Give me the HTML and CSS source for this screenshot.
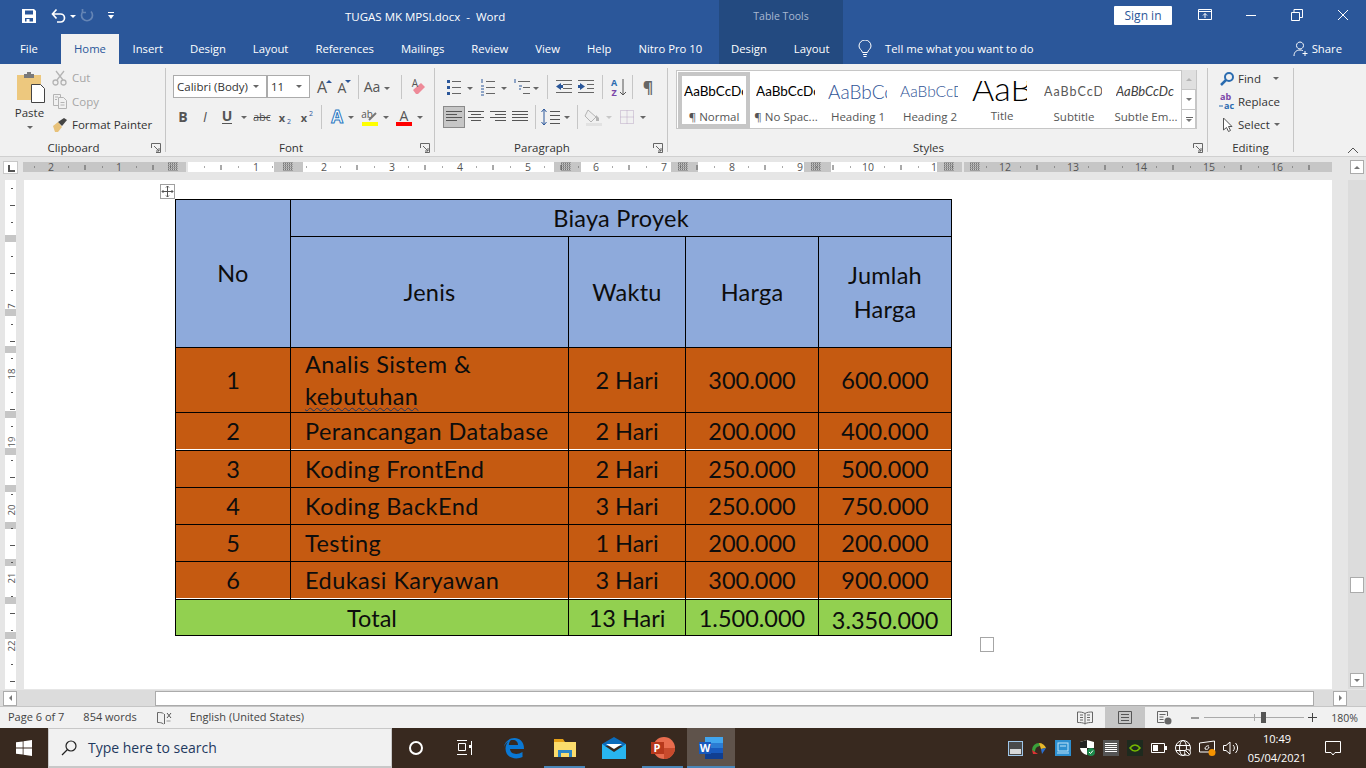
FILE: index.html
```html
<!DOCTYPE html>
<html>
<head>
	<title>TUGAS MK MPSI.docx - Word</title>
	<meta charset="utf-8">
	<link rel="stylesheet" href="styles.css">
</head>
<body>

<!-- title bar -->
<div class="titlebar">
	<div class="qat">
		<svg width="16" height="16" viewBox="0 0 16 16"><path fill="#fff" fill-rule="evenodd" d="M1 1h12l2 2v12H1zM4 2.500v4h8v-4zM4 10v3.500h1.500V11h3v2.500h3.500V10z"/></svg>
		<svg class="q-undo" width="26" height="16" viewBox="0 0 26 16"><path fill="none" stroke="#fff" stroke-width="1.700" d="M1.500 6h8a4 4 0 0 1 0 8H6M5.500 1.500L1.500 6l4 4.500"/><path fill="#fff" d="M19 7h6l-3 3z"/></svg>
		<svg class="q-redo" width="16" height="16" viewBox="0 0 16 16"><path fill="none" stroke="#6585b5" stroke-width="1.700" d="M4 3.500a5.500 5.500 0 1 0 8 0M3.500 1v3.500H7"/></svg>
		<svg class="q-more" width="8" height="10" viewBox="0 0 8 10"><path fill="#fff" d="M1 1h6v1H1zM1 4h6L4 8z"/></svg>
	</div>
	<div class="doc-title">TUGAS MK MPSI.docx &nbsp;-&nbsp; Word</div>
	<div class="ctx-title">Table Tools</div>
	<div class="win-right">
		<div class="signin">Sign in</div>
		<div class="winbtn"><svg width="14" height="12" viewBox="0 0 14 12"><path fill="none" stroke="#fff" d="M.5.500h13v10H.5zM.5 2.500h13M7 9V4.500M5 6.500l2-2 2 2"/></svg></div>
		<div class="winbtn"><svg width="12" height="12" viewBox="0 0 12 12"><path stroke="#fff" d="M1 6.500h10"/></svg></div>
		<div class="winbtn"><svg width="12" height="12" viewBox="0 0 12 12"><path fill="none" stroke="#fff" d="M.5 3.500h8v8h-8zM3 3.500v-3h8.500v8H8.500"/></svg></div>
		<div class="winbtn"><svg width="12" height="12" viewBox="0 0 12 12"><path stroke="#fff" d="M1 1l10 10M11 1L1 11"/></svg></div>
	</div>
</div>

<!-- tabs -->
<div class="tabs">
	<div class="tabs-main">
		<span class="tab tab-file">File</span>
		<span class="tab tab-home">Home</span>
		<span class="tab">Insert</span>
		<span class="tab">Design</span>
		<span class="tab">Layout</span>
		<span class="tab">References</span>
		<span class="tab">Mailings</span>
		<span class="tab">Review</span>
		<span class="tab">View</span>
		<span class="tab">Help</span>
		<span class="tab">Nitro Pro 10</span>
	</div>
	<div class="tabs-ctx">
		<span class="tab">Design</span>
		<span class="tab">Layout</span>
	</div>
	<div class="tell">
		<svg width="14" height="18" viewBox="0 0 14 18"><path fill="none" stroke="#fff" d="M4.500 12.500C4 10 1 9 1 6a6 6 0 0 1 12 0c0 3-3 4-3.500 6.500zM5 14.500h4M5.500 16.500h3"/></svg>
		<span>Tell me what you want to do</span>
	</div>
	<div class="share">
		<svg width="16" height="16" viewBox="0 0 16 16"><path fill="none" stroke="#fff" d="M7 1a3.500 3.500 0 1 0 .01 0zM1 15c0-4 2.500-6 6-6 1 0 2 .2 2.800.6M12 10v5M9.500 12.500h5"/></svg>
		<span>Share</span>
	</div>
</div>

<!-- ribbon -->
<div class="ribbon">

	<div class="group g-clip">
		<div class="group-body clip-body">
			<div class="paste">
				<svg width="30" height="32" viewBox="0 0 30 32"><path fill="#edc87e" d="M1 3h24v25H1z"/><path fill="#7a7a7a" d="M8 2h3V0h4v2h3v4H8z"/><path fill="#fff" stroke="#444" d="M15.500 12.500h9l4 4v14h-13z"/></svg>
				<span>Paste</span>
				<i class="caret"></i>
			</div>
			<div class="clip-rows">
				<div class="clip-row off"><svg width="16" height="16" viewBox="0 0 16 16"><g fill="none" stroke="#b4b4b4" stroke-width="1.300"><path d="M4 1l7 9M12 1L5 10"/><circle cx="3.500" cy="12.500" r="2.500"/><circle cx="11.500" cy="12.500" r="2.500"/></g></svg><span>Cut</span></div>
				<div class="clip-row off"><svg width="16" height="16" viewBox="0 0 16 16"><g fill="#f1f1f1" stroke="#b4b4b4"><path d="M1.500 1.500h7v11h-7z"/><path d="M6.500 4.500h5l3 3v8h-8z"/><path d="M3 4h3M3 6.500h2M8.500 9.500h4M8.500 12h4"/></g></svg><span>Copy</span></div>
				<div class="clip-row"><svg width="16" height="16" viewBox="0 0 16 16"><path fill="#e8c27a" d="M1 9l5-4 4 5-4 5H3z"/><path fill="#444" d="M6 5l6-4 3 2-5 6z"/></svg><span>Format Painter</span></div>
			</div>
		</div>
		<div class="group-label">Clipboard<svg class="launch" width="10" height="10" viewBox="0 0 10 10"><path fill="none" stroke="#666" d="M.5 5V.500h9v9H5M3 3l5 5M8 5v3H5"/></svg></div>
	</div>

	<div class="group g-font">
		<div class="group-body">
			<div class="tool-row font-row1">
				<div class="combo combo-font"><span>Calibri (Body)</span><i class="caret"></i></div>
				<div class="combo combo-size"><span>11</span><i class="caret"></i></div>
				<svg class="first-a" width="20" height="22" viewBox="0 0 20 22"><text x="9" y="17" class="ic-letter big">A</text><path fill="#2b579a" d="M13 7l3-3 3 3z"/></svg>
				<svg width="20" height="22" viewBox="0 0 20 22"><text x="9" y="17" class="ic-letter">A</text><path fill="#2b579a" d="M12 4h6l-3 3z"/></svg>
				<i class="sep sep-a"></i>
				<svg width="33" height="22" viewBox="0 0 33 22"><text x="10" y="16" class="ic-letter">Aa</text><path fill="#666" d="M22 11h6l-3 3z"/></svg>
				<i class="sep sep-b"></i>
				<svg width="20" height="22" viewBox="0 0 20 22"><path fill="#ee8a98" d="M5 14l8-7 4 4-7 7H8z"/><text x="7" y="11" class="ic-letter tiny">A</text></svg>
			</div>
			<div class="tool-row font-row2">
				<svg width="22" height="22" viewBox="0 0 22 22"><text x="11" y="16" class="ic-letter bold">B</text></svg>
				<svg width="22" height="22" viewBox="0 0 22 22"><text x="11" y="16" class="ic-letter ital">I</text></svg>
				<svg width="36" height="22" viewBox="0 0 36 22"><text x="11" y="15" class="ic-letter bold">U</text><path stroke="#555" d="M6 17.500h10"/><path fill="#666" d="M25 10h6l-3 3z"/></svg>
				<svg width="21" height="22" viewBox="0 0 21 22"><text x="10" y="15" class="ic-letter small">abc</text><path stroke="#444" d="M2 11.500h16"/></svg>
				<svg width="22" height="22" viewBox="0 0 22 22"><text x="9" y="16" class="ic-letter bold small">x</text><text x="16" y="18" class="ic-letter blue-sub">2</text></svg>
				<svg width="22" height="22" viewBox="0 0 22 22"><text x="9" y="16" class="ic-letter bold small">x</text><text x="16" y="10" class="ic-letter blue-sub">2</text></svg>
				<i class="sep"></i>
				<svg width="32" height="22" viewBox="0 0 32 22"><text x="11" y="17" class="ic-effect">A</text><path fill="#666" d="M22 10h6l-3 3z"/></svg>
				<svg width="34" height="22" viewBox="0 0 34 22"><text x="9" y="12" class="ic-letter tiny">ab</text><path stroke="#777" stroke-width="2" d="M11 14l7-7"/><path fill="#ffff00" d="M4 16h16v4H4z"/><path fill="#666" d="M25 10h6l-3 3z"/></svg>
				<svg width="36" height="22" viewBox="0 0 36 22"><text x="12" y="15" class="ic-letter">A</text><path fill="#f00" d="M4 16h16v4H4z"/><path fill="#666" d="M25 10h6l-3 3z"/></svg>
			</div>
		</div>
		<div class="group-label">Font<svg class="launch" width="10" height="10" viewBox="0 0 10 10"><path fill="none" stroke="#666" d="M.5 5V.500h9v9H5M3 3l5 5M8 5v3H5"/></svg></div>
	</div>

	<div class="group g-para">
		<div class="group-body">
			<div class="tool-row para-row1">
				<svg width="34" height="22" viewBox="0 0 34 22"><path fill="#2b579a" d="M4 4h3v3H4zM4 10h3v3H4zM4 16h3v3H4z"/><path stroke="#666" d="M9 5.500h9M9 11.500h9M9 17.500h9"/><path fill="#666" d="M24 11h6l-3 3z"/></svg>
				<svg width="33" height="22" viewBox="0 0 33 22"><path stroke="#2b579a" d="M5 3v4M4 10h3M4 13h3M4 16h3M4 19h3"/><path stroke="#666" d="M9 5.500h9M9 11.500h9M9 17.500h9"/><path fill="#666" d="M24 11h6l-3 3z"/></svg>
				<svg width="33" height="22" viewBox="0 0 33 22"><path stroke="#2b579a" d="M5 3v4M9 10h3M9 13h2"/><path stroke="#666" d="M8 5.500h12M13 11.500h7M13 17.500h7"/><path fill="#666" d="M23 11h6l-3 3z"/></svg>
				<i class="sep"></i>
				<svg width="23" height="22" viewBox="0 0 23 22"><path stroke="#666" d="M4 4.500h16M11 8.500h9M11 12.500h9M4 16.500h16"/><path fill="#2b579a" d="M4 10.500l5-3.500v2h2v3H9v2z"/></svg>
				<svg width="23" height="22" viewBox="0 0 23 22"><path stroke="#666" d="M3 4.500h16M3 16.500h16M12 8.500h7M12 12.500h7"/><path fill="#2b579a" d="M10 10.500L5 7v2H3v3h2v2z"/></svg>
				<i class="sep"></i>
				<svg width="21" height="22" viewBox="0 0 21 22"><text x="7" y="10" class="ic-az blue-t">A</text><text x="7" y="20" class="ic-az purple-t">Z</text><path fill="none" stroke="#555" d="M16 3v16M13 16l3 3 3-3"/></svg>
				<i class="sep"></i>
				<svg width="22" height="22" viewBox="0 0 22 22"><text x="11" y="17" class="ic-pil">¶</text></svg>
			</div>
			<div class="tool-row para-row2">
				<svg class="align-on" width="22" height="22" viewBox="0 0 22 22"><path stroke="#555" d="M3 5.500h16M3 8.500h11M3 11.500h16M3 14.500h11"/></svg>
				<svg width="22" height="22" viewBox="0 0 22 22"><path stroke="#555" d="M3 5.500h16M6 8.500h10M3 11.500h16M6 14.500h10"/></svg>
				<svg width="22" height="22" viewBox="0 0 22 22"><path stroke="#555" d="M3 5.500h16M8 8.500h11M3 11.500h16M8 14.500h11"/></svg>
				<svg width="22" height="22" viewBox="0 0 22 22"><path stroke="#555" d="M3 5.500h16M3 8.500h16M3 11.500h16M3 14.500h16"/></svg>
				<i class="sep"></i>
				<svg width="33" height="22" viewBox="0 0 33 22"><path fill="none" stroke="#2b579a" d="M4 3v16M1.500 6L4 3l2.500 3M1.500 16L4 19l2.500-3"/><path stroke="#555" d="M10 5.500h10M10 9.500h10M10 13.500h10M10 17.500h10"/><path fill="#666" d="M24 10h6l-3 3z"/></svg>
				<i class="sep"></i>
				<svg width="33" height="22" viewBox="0 0 33 22"><path fill="#eee" stroke="#b4b4b4" d="M6 4l8 7-5 5-6-6z"/><path fill="#b4b4b4" d="M14 9l3 3v3h-3z"/><path fill="#e2e2e2" d="M4 17h16v3H4z"/><path fill="#c8c8c8" d="M24 10h6l-3 3z"/></svg>
				<svg width="35" height="22" viewBox="0 0 35 22"><path fill="none" stroke="#bba9c4" stroke-dasharray="1 1" d="M5.500 4.500h13v13h-13zM12 4.500v13M5.500 11h13"/><path fill="#666" d="M25 10h6l-3 3z"/></svg>
			</div>
		</div>
		<div class="group-label">Paragraph<svg class="launch" width="10" height="10" viewBox="0 0 10 10"><path fill="none" stroke="#666" d="M.5 5V.500h9v9H5M3 3l5 5M8 5v3H5"/></svg></div>
	</div>

	<div class="group g-styles">
		<div class="group-body">
			<div class="gallery">
				<div class="style-item selected"><div class="preview">AaBbCcDc</div><div class="style-name">¶ Normal</div></div>
				<div class="style-item"><div class="preview">AaBbCcDc</div><div class="style-name">¶ No Spac...</div></div>
				<div class="style-item"><div class="preview pv-h1">AaBbCc</div><div class="style-name">Heading 1</div></div>
				<div class="style-item"><div class="preview pv-h2">AaBbCcD</div><div class="style-name">Heading 2</div></div>
				<div class="style-item"><div class="preview pv-title">AaB</div><div class="style-name">Title</div></div>
				<div class="style-item"><div class="preview pv-sub">AaBbCcD</div><div class="style-name">Subtitle</div></div>
				<div class="style-item"><div class="preview pv-em">AaBbCcDc</div><div class="style-name">Subtle Em...</div></div>
				<div class="gallery-scroll">
					<div class="gs-btn gs-off"><i class="tri-up"></i></div>
					<div class="gs-btn"><i class="tri-down"></i></div>
					<div class="gs-btn gs-more"><i class="bar"></i><i class="tri-down"></i></div>
				</div>
			</div>
		</div>
		<div class="group-label">Styles<svg class="launch" width="10" height="10" viewBox="0 0 10 10"><path fill="none" stroke="#666" d="M.5 5V.500h9v9H5M3 3l5 5M8 5v3H5"/></svg></div>
	</div>

	<div class="group g-edit">
		<div class="group-body edit-body">
			<div class="edit-row"><svg width="16" height="16" viewBox="0 0 16 16"><circle cx="10" cy="6" r="4" fill="none" stroke="#2b6cb0" stroke-width="2"/><path stroke="#2b6cb0" stroke-width="2.500" d="M7 9l-5 5"/></svg><span>Find</span><i class="caret cr-find"></i></div>
			<div class="edit-row"><svg width="16" height="17" viewBox="0 0 16 17"><text x="1" y="7" class="ic-rep purple-t">ab</text><text x="5" y="16" class="ic-rep blue-t">ac</text><path stroke="#2b6cb0" d="M0 13h4"/></svg><span>Replace</span></div>
			<div class="edit-row"><svg width="16" height="16" viewBox="0 0 16 16"><path fill="#fff" stroke="#555" d="M4.500 1v12l3-2.500 2 4 2-1-2-4h3.500z"/></svg><span>Select</span><i class="caret cr-select"></i></div>
		</div>
		<div class="group-label plain">Editing</div>
	</div>

	<svg class="collapse" width="12" height="7" viewBox="0 0 12 7"><path fill="none" stroke="#555" d="M1 6l5-5 5 5"/></svg>
</div>

<!-- horizontal ruler -->
<div class="ruler-row">
	<div class="tabstop"><svg width="8" height="8" viewBox="0 0 8 8"><path fill="#555" d="M1 1h2v5h5v2H1z"/></svg></div>
	<svg class="hruler" width="1309" height="10" viewBox="23 0 1309 10">
		<defs><path id="gridmark" stroke="#777" stroke-dasharray="1 1" d="M-4 0v9M-2 0v9M0 0v9M2 0v9M4 0v9M-5 1.500h10M-5 3.500h10M-5 5.500h10M-5 7.500h10"/></defs>
		<rect x="23" width="1309" height="10" fill="#c6c6c6"/>
		<rect x="186" width="2" height="10" fill="#e6e6e6"/>
		<rect x="188" width="86" height="10" fill="#fff"/>
		<rect x="303" width="251" height="10" fill="#fff"/>
		<rect x="581" width="90" height="10" fill="#fff"/>
		<rect x="698" width="106" height="10" fill="#fff"/>
		<rect x="831" width="106" height="10" fill="#fff"/>
		<rect x="962" width="2" height="10" fill="#e6e6e6"/>
		<use href="#gridmark" x="173"/><use href="#gridmark" x="288"/><use href="#gridmark" x="566"/><use href="#gridmark" x="683"/><use href="#gridmark" x="816"/><use href="#gridmark" x="949"/><use href="#gridmark" x="975"/>
		<path stroke="#555" stroke-dasharray="1 33" d="M34 5h1290"/>
		<path stroke="#555" stroke-width="1" d="M85 3v5M153 3v5M221 3v5M357 3v5M425 3v5M493 3v5M561 3v5M629 3v5M697 3v5M765 3v5M833 3v5M901 3v5M1037 3v5M1105 3v5M1173 3v5M1241 3v5M1309 3v5"/>
		<g class="rtext">
			<text x="51" y="9">2</text><text x="119" y="9">1</text><text x="256" y="9">1</text><text x="324" y="9">2</text><text x="392" y="9">3</text><text x="460" y="9">4</text><text x="528" y="9">5</text><text x="596" y="9">6</text><text x="664" y="9">7</text><text x="732" y="9">8</text><text x="800" y="9">9</text><text x="868" y="9">10</text><text x="934" y="9">1</text><text x="1005" y="9">12</text><text x="1073" y="9">13</text><text x="1141" y="9">14</text><text x="1209" y="9">15</text><text x="1277" y="9">16</text>
		</g>
	</svg>
</div>

<!-- document area -->
<div class="doc-area">
	<svg class="vruler" width="24" height="509" viewBox="0 180 24 509">
		<rect x="5" y="180" width="11" height="509" fill="#fff"/>
		<g fill="#c6c6c6">
			<rect x="5" y="235" width="11" height="7"/><rect x="5" y="309" width="11" height="7"/><rect x="5" y="346" width="11" height="7"/><rect x="5" y="411" width="11" height="7"/><rect x="5" y="448" width="11" height="7"/><rect x="5" y="485" width="11" height="7"/><rect x="5" y="522" width="11" height="7"/><rect x="5" y="559" width="11" height="7"/><rect x="5" y="597" width="11" height="7"/><rect x="5" y="632" width="11" height="7"/>
		</g>
		<path stroke="#555" d="M11 188.500h2M10 205.500h5M11 222.500h2M11 256.500h2M10 273.500h5M11 290.500h2M11 324.500h2M10 341.500h5M11 358.500h2M11 392.500h2M10 409.500h5M11 426.500h2M11 460.500h2M10 477.500h5M11 494.500h2M11 528.500h2M10 545.500h5M11 562.500h2M11 596.500h2M10 613.500h5M11 630.500h2M11 664.500h2M10 681.500h5"/>
		<g class="rtext vtext">
			<text transform="translate(15 306) rotate(-90)">7</text>
			<text transform="translate(15 374) rotate(-90)">18</text>
			<text transform="translate(15 442) rotate(-90)">19</text>
			<text transform="translate(15 510) rotate(-90)">20</text>
			<text transform="translate(15 578) rotate(-90)">21</text>
			<text transform="translate(15 646) rotate(-90)">22</text>
		</g>
	</svg>

	<div class="page">
		<div class="move-handle"><svg width="13" height="13" viewBox="0 0 13 13"><path fill="none" stroke="#555" d="M6.500 1v11M1 6.500h11M5 2.500L6.500 1 8 2.500M5 10.500L6.500 12 8 10.500M2.500 5L1 6.500 2.500 8M10.500 5L12 6.500 10.500 8"/></svg></div>
		<table class="cost">
			<colgroup><col class="c-no"><col class="c-jenis"><col class="c-waktu"><col class="c-harga"><col class="c-jumlah"></colgroup>
			<tr class="head r-37">
				<td rowspan="2" class="no-head">No</td>
				<td colspan="4">Biaya Proyek</td>
			</tr>
			<tr class="head r-111">
				<td>Jenis</td>
				<td>Waktu</td>
				<td>Harga</td>
				<td class="jumlah">Jumlah<br>Harga</td>
			</tr>
			<tr class="item r-65">
				<td>1</td>
				<td class="left two-line">Analis Sistem &amp;<br><span class="spell">kebutuhan</span></td>
				<td>2 Hari</td><td>300.000</td><td>600.000</td>
			</tr>
			<tr class="item r-38 white-under">
				<td>2</td><td class="left">Perancangan Database</td>
				<td>2 Hari</td><td>200.000</td><td>400.000</td>
			</tr>
			<tr class="item r-37">
				<td>3</td><td class="left">Koding FrontEnd</td>
				<td>2 Hari</td><td>250.000</td><td>500.000</td>
			</tr>
			<tr class="item r-37">
				<td>4</td><td class="left">Koding BackEnd</td>
				<td>3 Hari</td><td>250.000</td><td>750.000</td>
			</tr>
			<tr class="item r-37">
				<td>5</td><td class="left">Testing</td>
				<td>1 Hari</td><td>200.000</td><td>200.000</td>
			</tr>
			<tr class="item r-38 white-under">
				<td>6</td><td class="left">Edukasi Karyawan</td>
				<td>3 Hari</td><td>300.000</td><td>900.000</td>
			</tr>
			<tr class="total r-36">
				<td colspan="2">Total</td>
				<td>13 Hari</td><td>1.500.000</td><td class="low">3.350.000</td>
			</tr>
		</table>
		<div class="resize-handle"></div>
	</div>

	<div class="vscroll">
		<div class="sb-btn"><i class="tri-up"></i></div>
		<div class="v-track"><div class="v-thumb"></div></div>
		<div class="sb-btn"><i class="tri-down"></i></div>
	</div>
</div>

<!-- horizontal scrollbar -->
<div class="hscroll">
	<div class="sb-btn h-left"><i class="tri-left"></i></div>
	<div class="h-track"><div class="h-thumb"></div></div>
	<div class="sb-btn h-right"><i class="tri-right"></i></div>
</div>

<!-- status bar -->
<div class="statusbar">
	<span class="st-page">Page 6 of 7</span>
	<span class="st-words">854 words</span>
	<svg class="st-proof" width="15" height="14" viewBox="0 0 15 14"><path fill="none" stroke="#666" d="M6.500 2.500C5 1.500 3 1.500.5 1.500v10c2.500 0 4 0 6 1.500M7.500 3v10"/><path stroke="#555" d="M10 2l4 5M14 2l-4 5"/><path stroke="#999" d="M9.500 10h4"/></svg>
	<span class="st-lang">English (United States)</span>
	<div class="st-right">
		<svg class="st-view" width="16" height="14" viewBox="0 0 16 14"><path fill="none" stroke="#666" d="M8 2.500C6 1 3 1 .5 1v10.500c3 0 5.500 0 7.500 1.500 2-1.500 4.500-1.500 7.500-1.500V1C13 1 10 1 8 2.500zM8 2.500V13M3 4h3M3 6.500h3M3 9h3M10 4h3M10 6.500h3M10 9h3"/></svg>
		<div class="st-print"><svg width="14" height="13" viewBox="0 0 14 13"><path fill="none" stroke="#555" d="M.5.500h13v12H.5zM3 3.500h8M3 6.500h8M3 9.500h8"/></svg></div>
		<svg class="st-web" width="15" height="14" viewBox="0 0 15 14"><path fill="none" stroke="#666" d="M7.500 11.500h-7V.500h10V5M2.500 3.500h6M2.500 6h4M2.500 8.500h4"/><circle cx="11" cy="10" r="3.500" fill="#666"/></svg>
		<svg class="st-minus" width="8" height="2" viewBox="0 0 8 2"><path stroke="#444" d="M0 1h8"/></svg>
		<div class="zoom-slider"><i class="tick"></i><i class="thumb"></i></div>
		<svg class="st-plus" width="9" height="9" viewBox="0 0 9 9"><path stroke="#444" d="M0 4.500h9M4.500 0v9"/></svg>
		<span class="st-zoom">180%</span>
	</div>
</div>

<!-- taskbar -->
<div class="taskbar">
	<div class="start"><svg width="16" height="16" viewBox="0 0 16 16"><path fill="#fff" d="M0 2.300l6.700-.9v6.200H0zM7.500 1.300L16 0v7.600H7.500zM0 8.400h6.700v6.200L0 13.700zM7.500 8.400H16V16l-8.500-1.200z"/></svg></div>
	<div class="search">
		<svg width="16" height="16" viewBox="0 0 16 16"><circle cx="10" cy="6" r="5" fill="none" stroke="#222" stroke-width="1.200"/><path stroke="#222" stroke-width="1.300" d="M6.500 9.500L1 15"/></svg>
		<span>Type here to search</span>
	</div>
	<div class="tb-slot"><svg width="16" height="16" viewBox="0 0 16 16"><circle cx="8" cy="8" r="6" fill="none" stroke="#fff" stroke-width="2"/></svg></div>
	<div class="tb-slot"><svg width="16" height="16" viewBox="0 0 16 16"><path fill="none" stroke="#fff" d="M1 .5h10M2.500 3.500h7v7h-7zM1 14.500h10M15.500 1v14"/><path fill="#fff" d="M13 5h3v3h-3z"/></svg></div>
	<div class="tb-slot app edge"><svg width="20" height="22" viewBox="0 0 20 22"><path fill="#0a78d4" d="M10.500 1C15.500 1 20 4.500 20 12H6c.300 5 7 6.500 12.500 3v5c-6 3-17 1.500-17-8.500C1.500 7 4.500 3 8 2 5.500 4 5 6 4.800 8H14c0-3-2-5-5-5C4 3 1 7 0 10 .5 5 5 1 10.500 1z"/></svg></div>
	<div class="tb-slot app"><svg width="22" height="18" viewBox="0 0 22 18"><path fill="#e6a117" d="M0 0h9l2 3H0z"/><path fill="#fbdc6c" d="M0 3h22v15H0z"/><path fill="#2b86c5" d="M4 11h14v7h-3v-4H7v4H4z"/></svg><i class="run"></i></div>
	<div class="tb-slot app"><svg width="24" height="22" viewBox="0 0 24 22"><path fill="#0b6cbc" d="M12 0l12 7v2H0V7z"/><path fill="#28b5f0" d="M0 7l12 8 12-8v15H0z"/><path fill="#fff" d="M4 7h16l-8 5z"/></svg></div>
	<div class="tb-slot app"><svg width="24" height="22" viewBox="0 0 24 22"><circle cx="13" cy="11" r="11" fill="#e86c4e"/><path fill="#c84a2c" d="M13 11h11a11 11 0 0 1-11 11z"/><rect y="5" width="13" height="12" fill="#b7381c"/><text x="6" y="15" class="ic-app">P</text></svg><i class="run"></i></div>
	<div class="tb-slot app active"><svg width="24" height="22" viewBox="0 0 24 22"><path fill="#41a5ee" d="M6 0h18v6H6z"/><path fill="#2b7cd3" d="M6 6h18v5H6z"/><path fill="#185abd" d="M6 11h18v5H6z"/><path fill="#103f91" d="M6 16h18v6H6z"/><rect y="5" width="12" height="12" fill="#185abd"/><text x="6" y="15" class="ic-app">W</text></svg><i class="run"></i></div>

	<div class="tray">
		<div class="tray-i"><svg width="15" height="15" viewBox="0 0 15 15"><rect x=".5" y=".5" width="14" height="14" fill="#4a4a4a" stroke="#9fc6e8"/><path fill="#d8d8d8" d="M2 8h11v5H2z"/></svg></div>
		<div class="tray-i"><svg width="16" height="14" viewBox="0 0 16 14"><path fill="#3aa13a" d="M1 9a7 7 0 0 1 7-7l2 3C6 5 4 7 4 11z"/><path fill="#e8b82a" d="M8 2c3 0 6 2 7 5l-5 1z"/><path fill="#2a6fd0" d="M10 8l5-1-4 6z"/><path fill="#d33" d="M1 9l3 2 3 2H2z"/></svg></div>
		<div class="tray-i"><svg width="16" height="16" viewBox="0 0 16 16"><rect width="16" height="16" fill="#2c8fd0"/><rect x="3" y="3" width="10" height="8" fill="none" stroke="#bfe4f7"/><path stroke="#bfe4f7" d="M2 13h12M5 6h6"/></svg></div>
		<div class="tray-i"><svg width="15" height="16" viewBox="0 0 15 16"><path fill="#fff" d="M7 0l7 2v5c0 4-3 7-7 8-4-1-7-4-7-8V2z"/><path fill="#222" d="M7 0v8H0V2zM7 8h7c0 3-3 6-7 7z"/><circle cx="11" cy="12" r="4" fill="#1b8a4b"/><path fill="none" stroke="#fff" d="M9 12l1.500 1.500 2.500-3"/></svg></div>
		<div class="tray-i"><svg width="16" height="16" viewBox="0 0 16 16"><rect width="16" height="16" fill="#555"/><path stroke="#fff" d="M2 3.500h12M2 5.500h12M2 7.500h12M2 9.500h12M2 11.500h12"/></svg></div>
		<div class="tray-i"><svg width="16" height="16" viewBox="0 0 16 16"><rect width="16" height="16" fill="#1e2a1e"/><path fill="none" stroke="#76b900" stroke-width="1.500" d="M3 8c3-4 7-4 10 0-3 4-7 4-10 0z"/></svg></div>
		<div class="tray-i"><svg width="16" height="10" viewBox="0 0 16 10"><path fill="none" stroke="#fff" d="M.5.500h13v9H.5z"/><path fill="#fff" d="M2 2h5v6H2zM14 3h2v4h-2z"/></svg></div>
		<div class="tray-i"><svg width="16" height="16" viewBox="0 0 16 16"><g fill="none" stroke="#fff"><circle cx="8" cy="8" r="7.500"/><ellipse cx="8" cy="8" rx="3.500" ry="7.500"/><path d="M1 5.500h14M1 10.500h14"/></g><circle cx="12.500" cy="12.500" r="3" fill="#38291f" stroke="#fff"/><path stroke="#fff" d="M10.500 10.500l4 4"/></svg></div>
		<div class="tray-i"><svg width="17" height="16" viewBox="0 0 17 16"><path fill="none" stroke="#fff" d="M.5 3l15-2v11h-15zM6 9a3 3 0 0 1 4-3M10 7a3 3 0 0 1-4 2"/><circle cx="13" cy="12.500" r="3.500" fill="#f59300"/></svg></div>
		<div class="tray-i"><svg width="16" height="14" viewBox="0 0 16 14"><path fill="none" stroke="#fff" d="M.5 4.500h2.500L7 1v12L3 9.500H.5zM10 4a4 4 0 0 1 0 6M12.500 2a7 7 0 0 1 0 10"/></svg></div>
		<div class="clock"><span>10:49</span><span>05/04/2021</span></div>
		<div class="notif"><svg width="16" height="15" viewBox="0 0 16 15"><path fill="none" stroke="#fff" d="M.5.500h15v11H10L8 14l-2-2.500H.5z"/></svg></div>
	</div>
</div>

</body>
</html>
```

FILE: styles.css
```css
* {
	box-sizing: border-box;
}
html, body {
	margin: 0;
	padding: 0;
	width: 1366px;
	height: 768px;
	overflow: hidden;
}
body {
	display: flex;
	flex-direction: column;
	font-family: "Open Sans", "Noto Sans", sans-serif;
	font-size: 11.5px;
	color: #444;
	background: #e6e6e6;
}
svg {
	display: block;
	flex: none;
}

/* title bar */
.titlebar {
	height: 34px;
	flex: none;
	display: flex;
	align-items: center;
	background: #2b579a;
	color: #fff;
}
.qat {
	width: 345px;
	flex: none;
	display: flex;
	align-items: center;
	padding: 0 0 2px 21px;
}
.q-undo {
	margin-left: 14px;
}
.q-redo {
	margin-left: 2px;
}
.q-more {
	margin-left: 12px;
}
.doc-title {
	width: 374px;
	flex: none;
	font-size: 11.5px;
	padding-bottom: 2px;
}
.ctx-title {
	width: 124px;
	height: 34px;
	flex: none;
	line-height: 32px;
	text-align: center;
	font-size: 10.5px;
	color: #a9b8d0;
	background: #234a80;
}
.win-right {
	flex: 1;
	display: flex;
	justify-content: flex-end;
	align-items: center;
}
.signin {
	width: 58px;
	height: 19px;
	margin: 0 10px 3px 0;
	background: #fff;
	color: #2b579a;
	text-align: center;
	line-height: 19px;
	border-radius: 1px;
	font-size: 12px;
}
.winbtn {
	width: 46px;
	height: 30px;
	margin-bottom: 4px;
	display: flex;
	align-items: center;
	justify-content: center;
}

/* tabs */
.tabs {
	height: 30px;
	flex: none;
	display: flex;
	background: #2b579a;
	color: #fff;
	font-size: 11.3px;
}
.tabs-main {
	width: 719px;
	flex: none;
	display: flex;
}
.tab {
	flex: none;
	padding: 0 13.5px;
	line-height: 29px;
	white-space: nowrap;
}
.tabs-ctx .tab:first-child {
	padding-left: 12px;
}
.tab-file {
	width: 61px;
	padding: 0 0 0 20px;
}
.tab-home {
	background: #f1f1f1;
	color: #2b579a;
	width: 58px;
	padding: 0;
	text-align: center;
}
.tabs-ctx {
	width: 124px;
	flex: none;
	display: flex;
	background: #234a80;
}
.tell {
	display: flex;
	align-items: center;
	gap: 13px;
	margin-left: 15px;
	padding-bottom: 1px;
}
.share {
	display: flex;
	align-items: center;
	gap: 3px;
	margin-left: auto;
	padding: 0 24px 1px 0;
}

/* ribbon */
.ribbon {
	height: 93px;
	flex: none;
	display: flex;
	position: relative;
	padding-top: 4px;
	background: #f1f1f1;
	border-bottom: 1px solid #d0d0d0;
}
.group {
	height: 84px;
	flex: none;
	display: flex;
	flex-direction: column;
	border-right: 1px solid #c6c6c6;
}
.g-clip {
	width: 166px;
}
.g-font {
	width: 269px;
}
.g-para {
	width: 233px;
}
.g-styles {
	width: 540px;
}
.g-edit {
	width: 86px;
}
.group-body {
	height: 68px;
	flex: none;
	padding-top: 7px;
}
.group-label {
	position: relative;
	margin-top: 8px;
	padding-right: 18px;
	height: 8px;
	line-height: 8px;
	text-align: center;
	color: #333;
}
.group-label.plain {
	padding-right: 0;
}
.launch {
	position: absolute;
	right: 4px;
	top: -1px;
}
.collapse {
	position: absolute;
	left: 1347px;
	top: 83px;
}
.caret {
	display: block;
	width: 0;
	height: 0;
	border-left: 3px solid transparent;
	border-right: 3px solid transparent;
	border-top: 3px solid #666;
}
.sep {
	display: block;
	width: 1px;
	height: 24px;
	margin: 0 4px;
	background: #c6c6c6;
	flex: none;
}
.tool-row {
	display: flex;
	align-items: center;
	height: 23px;
}
.font-row1, .para-row1 {
	margin-bottom: 7px;
}

/* clipboard */
.clip-body {
	display: flex;
	padding-top: 0;
}
.paste {
	width: 52px;
	flex: none;
	display: flex;
	flex-direction: column;
	align-items: center;
	padding-top: 4px;
	padding-left: 7px;
	color: #333;
}
.paste svg {
	margin-left: 2px;
}
.paste span {
	line-height: 17px;
}
.paste .caret {
	margin-top: 5px;
}
.clip-rows {
	margin-top: -2px;
}
.clip-row {
	height: 23.5px;
	display: flex;
	align-items: center;
	gap: 4px;
	color: #333;
}
.clip-row.off {
	color: #a6a6a6;
}

/* font group */
.font-row1 {
	padding-left: 7px;
}
.font-row2 {
	padding-left: 6px;
}
.combo {
	height: 23px;
	display: flex;
	align-items: center;
	justify-content: space-between;
	padding: 0 7px 0 3px;
	background: #fff;
	border: 1px solid #ababab;
	color: #333;
}
.combo-font {
	width: 94px;
}
.combo-size {
	width: 43px;
	margin-left: 0;
}
.first-a {
	margin-left: 3px;
}
.sep-a {
	margin: 0 3px 0 5px;
}
.sep-b {
	margin: 0 6px 0 6px;
}
.ic-letter {
	font-family: "Open Sans", sans-serif;
	font-size: 14px;
	fill: #555;
	text-anchor: middle;
}
.ic-letter.big {
	font-size: 16px;
}
.ic-letter.tiny {
	font-size: 10px;
}
.ic-letter.small {
	font-size: 11px;
}
.ic-letter.bold {
	font-weight: 700;
}
.ic-letter.ital {
	font-style: italic;
}
.ic-letter.blue-sub {
	font-size: 7px;
	fill: #2b579a;
}
.ic-effect {
	font-family: "Open Sans", sans-serif;
	font-size: 17px;
	font-weight: 700;
	fill: #fff;
	stroke: #2b79c2;
	text-anchor: middle;
}

/* paragraph group */
.para-row1, .para-row2 {
	padding-left: 8px;
}
.align-on {
	background: #c6c6c6;
	outline: 1px solid #8a8a8a;
	outline-offset: -1px;
}
.ic-az {
	font-family: "Open Sans", sans-serif;
	font-size: 9px;
	font-weight: 700;
	text-anchor: middle;
}
.ic-rep {
	font-family: "Open Sans", sans-serif;
	font-size: 9px;
	font-weight: 700;
}
.blue-t {
	fill: #2b6cb0;
}
.purple-t {
	fill: #7b45a8;
}
.ic-pil {
	font-family: "Open Sans", sans-serif;
	font-size: 16px;
	font-weight: 700;
	fill: #666;
	text-anchor: middle;
}

/* styles gallery */
.g-styles .group-body {
	padding: 2px 0 0 8px;
}
.gallery {
	width: 521px;
	height: 59px;
	display: flex;
	padding-left: 1px;
	padding-top: 1px;
	background: #fff;
	border: 1px solid #c6c6c6;
	border-right-width: 2px;
}
.style-item {
	width: 72px;
	height: 56px;
	flex: none;
	padding: 0 5px;
	text-align: center;
	overflow: hidden;
	border: 4px solid transparent;
}
.style-item.selected {
	border-color: #c6c6c6;
}
.preview {
	height: 31px;
	line-height: 31px;
	overflow: hidden;
	white-space: nowrap;
	width: 59px;
	margin-left: -3px;
	font-family: Lato, sans-serif;
	font-size: 13.5px;
	color: #000;
	text-align: left;
}
.pv-h1 {
	font-size: 19px;
	font-weight: 300;
	color: #2f5496;
}
.pv-h2 {
	font-size: 15.5px;
	color: #2f5496;
	font-weight: 300;
	width: 58px;
}
.pv-title {
	width: 55px;
	height: 21px;
	margin-top: 5px;
	margin-bottom: 5px;
	font-size: 34px;
	line-height: 14px;
	font-weight: 300;
}
.pv-sub {
	font-size: 12.5px;
	letter-spacing: 1px;
	color: #595959;
	width: 58px;
}
.pv-em {
	font-style: italic;
	font-size: 13px;
	color: #404040;
}
.style-name {
	line-height: 18px;
	margin-top: 1px;
	white-space: nowrap;
	color: #555;
	margin-left: -6px;
	margin-right: -6px;
}
.gallery-scroll {
	width: 15px;
	margin-left: -1px;
	margin-top: -2px;
	height: 59px;
	flex: none;
	border-left: 1px solid #c6c6c6;
	display: flex;
	flex-direction: column;
}
.gs-btn {
	flex: 1;
	display: flex;
	flex-direction: column;
	gap: 1px;
	align-items: center;
	justify-content: center;
	border-bottom: 1px solid #c6c6c6;
}
.gs-off {
	background: #e0e0e0;
}
.gs-more {
	border-bottom: 0;
}
.bar {
	display: block;
	width: 7px;
	height: 1px;
	background: #666;
}
.tri-up, .tri-down, .tri-left, .tri-right {
	display: block;
	width: 0;
	height: 0;
	border: 3.5px solid transparent;
}
.tri-up {
	border-bottom-color: #777;
	border-top-width: 0;
}
.tri-down {
	border-top-color: #777;
	border-bottom-width: 0;
}
.tri-left {
	border-right-color: #777;
	border-left-width: 0;
}
.tri-right {
	border-left-color: #777;
	border-right-width: 0;
}
.gs-off .tri-up {
	border-bottom-color: #b4b4b4;
}

/* editing */
.edit-body {
	padding: 0 0 0 11px;
}
.edit-row {
	height: 23px;
	display: flex;
	align-items: center;
	gap: 3px;
	color: #333;
}
.edit-row:first-child {
	margin-top: -1px;
}
.cr-find {
	margin-left: 9px;
}
.cr-select {
	margin-left: 1px;
}

/* rulers */
.ruler-row {
	height: 23px;
	flex: none;
	display: flex;
	background: #e6e6e6;
	padding-top: 5px;
}
.tabstop {
	width: 15px;
	height: 13px;
	margin: -1px 5px 0 3px;
	display: flex;
	align-items: center;
	justify-content: center;
	background: #fff;
	border: 1px solid #c8c8c8;
}
.rtext text {
	font-family: "Open Sans", sans-serif;
	font-size: 10.5px;
	fill: #555;
	text-anchor: middle;
}
.vtext text {
	font-size: 9.5px;
}

/* document */
.doc-area {
	height: 509px;
	flex: none;
	display: flex;
}
.page {
	position: relative;
	width: 1308px;
	flex: none;
	padding: 19px 0 0 151px;
	background: #fff;
}
.move-handle {
	position: absolute;
	left: 136px;
	top: 4px;
	width: 15px;
	height: 15px;
	display: flex;
	align-items: center;
	justify-content: center;
	border: 1px solid #a0a0a0;
	background: #fff;
}
.resize-handle {
	position: absolute;
	left: 956px;
	top: 457px;
	width: 14px;
	height: 15px;
	border: 1px solid #a6a6a6;
	background: #fff;
}
.cost {
	border-collapse: collapse;
	table-layout: fixed;
	width: 777px;
	font-family: Lato, sans-serif;
	font-size: 23.5px;
	color: #0d0d0d;
}
.cost td {
	border: 1px solid #000;
	padding: 0;
	text-align: center;
	vertical-align: middle;
	line-height: 33px;
}
.cost td.left {
	text-align: left;
	padding-left: 14px;
	letter-spacing: .45px;
}
.c-no {
	width: 115px;
}
.c-jenis {
	width: 278px;
}
.c-waktu {
	width: 117px;
}
.c-harga {
	width: 133px;
}
.c-jumlah {
	width: 133px;
}
.r-36 {
	height: 36px;
}
.r-37 {
	height: 37px;
}
.r-38 {
	height: 38px;
}
.r-65 {
	height: 65px;
}
.r-111 {
	height: 111px;
}
.head td {
	background: #8eaadb;
	letter-spacing: .25px;
}
.item td {
	background: #c55a11;
}
.total td {
	background: #92d050;
}
.cost td.two-line {
	line-height: 32px;
}
.cost td.jumlah {
	line-height: 34px;
}
.white-under td {
	box-shadow: inset 0 -1px 0 #fff;
}
.total td {
	line-height: 30px;
}
.cost td.low {
	padding-top: 5px;
	line-height: 30px;
}
.spell {
	text-decoration: underline wavy #1f3864 1px;
	text-underline-offset: 2px;
}

/* scrollbars */
.vscroll {
	width: 34px;
	flex: none;
	display: flex;
	flex-direction: column;
	align-items: flex-end;
	padding: 0 2px 2px 16px;
	background: linear-gradient(to right, #e6e6e6 16px, #dcdcdc 16px);
}
.sb-btn {
	width: 14px;
	height: 14px;
	flex: none;
	display: flex;
	align-items: center;
	justify-content: center;
	background: #fff;
	border: 1px solid #ababab;
}
.vscroll .sb-btn:last-child {
	margin-top: auto;
}
.v-track {
	flex: 1;
	width: 14px;
	position: relative;
}
.v-thumb {
	position: absolute;
	left: 0;
	top: 397px;
	width: 14px;
	height: 16px;
	background: #fff;
	border: 1px solid #ababab;
}
.vscroll .sb-btn:first-child {
	position: absolute;
	top: 160px;
}
.hscroll {
	height: 17px;
	flex: none;
	display: flex;
	align-items: center;
	background: #dcdcdc;
	border-top: 1px solid #e6e6e6;
	padding: 0 19px 0 3px;
}
.h-track {
	flex: 1;
	height: 15px;
	padding: 0 19px 0 138px;
}
.h-thumb {
	height: 15px;
	background: #fff;
	border: 1px solid #ababab;
}
.hscroll .sb-btn {
	height: 15px;
}

/* status bar */
.statusbar {
	height: 22px;
	flex: none;
	display: flex;
	align-items: center;
	background: #f1f1f1;
	border-top: 1px solid #c6c6c6;
	font-size: 11px;
	color: #444;
}
.st-page, .st-words, .st-lang {
	padding-bottom: 2px;
}
.st-page {
	margin-left: 8px;
}
.st-words {
	margin-left: 19px;
}
.st-proof {
	margin-left: 20px;
}
.st-lang {
	margin-left: 18px;
}
.st-right {
	margin-left: auto;
	display: flex;
	align-items: center;
	height: 100%;
	padding-right: 8px;
}
.st-print {
	width: 40px;
	height: 100%;
	margin-left: 12px;
	display: flex;
	align-items: center;
	justify-content: center;
	background: #c6c6c6;
}
.st-web {
	margin-left: 12px;
}
.st-minus {
	margin-left: 19px;
}
.zoom-slider {
	position: relative;
	width: 100px;
	height: 1px;
	margin-left: 5px;
	background: #aaa;
}
.zoom-slider .tick {
	position: absolute;
	left: 50px;
	top: -3px;
	width: 1px;
	height: 7px;
	background: #aaa;
}
.zoom-slider .thumb {
	position: absolute;
	left: 57px;
	top: -5px;
	width: 5px;
	height: 11px;
	background: #555;
}
.st-plus {
	margin-left: 4px;
}
.st-zoom {
	margin-left: 14px;
	font-size: 10.5px;
}

/* taskbar */
.taskbar {
	height: 40px;
	flex: none;
	display: flex;
	background: #38291f;
}
.start {
	width: 48px;
	flex: none;
	display: flex;
	align-items: center;
	justify-content: center;
}
.search {
	width: 344px;
	flex: none;
	display: flex;
	align-items: center;
	gap: 11px;
	padding-left: 12px;
	background: #f1f1f1;
	border: 1px solid #c8c8c8;
	border-bottom-width: 2px;
	font-size: 14px;
	color: #1f3a5f;
}
.tb-slot {
	position: relative;
	width: 48px;
	flex: none;
	display: flex;
	align-items: center;
	justify-content: center;
}
.tb-slot.app {
	width: 49px;
}
.tb-slot.edge {
	width: 52px;
}
.tb-slot.active {
	background: #5f534b;
	width: 48px;
}
.run {
	position: absolute;
	left: 4px;
	right: 4px;
	bottom: 0;
	height: 2px;
	background: #4a86b8;
}
.active .run {
	left: 0;
	right: 0;
}
.ic-app {
	font-family: "Open Sans", sans-serif;
	font-size: 11px;
	font-weight: 700;
	fill: #fff;
	text-anchor: middle;
}
.tray {
	margin-left: auto;
	display: flex;
	align-items: center;
	height: 100%;
	padding-right: 12px;
}
.tray-i {
	width: 24px;
	display: flex;
	justify-content: center;
}
.clock {
	width: 68px;
	display: flex;
	flex-direction: column;
	align-items: center;
	gap: 5px;
	font-size: 11px;
	line-height: 14px;
	color: #fff;
}
.notif {
	width: 42px;
	margin-left: 1px;
	display: flex;
	justify-content: center;
}
```
